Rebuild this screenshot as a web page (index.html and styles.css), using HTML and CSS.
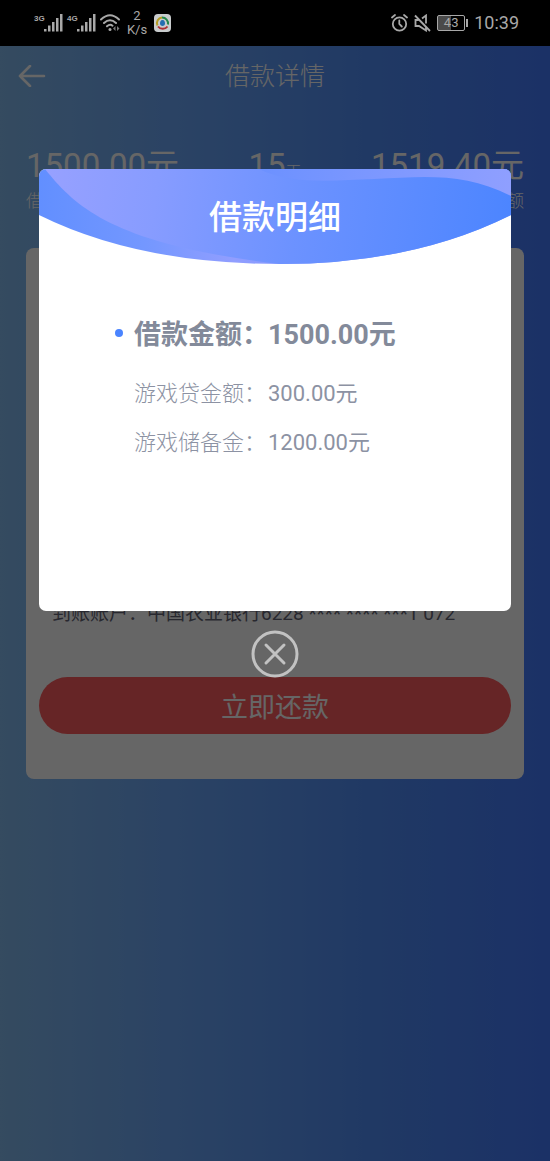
FILE: index.html
```html
<!DOCTYPE html>
<html lang="zh-CN">
<head>
<meta charset="utf-8">
<meta name="viewport" content="width=device-width, initial-scale=1">
<title>借款详情</title>
<link rel="stylesheet" href="styles.css">
</head>
<body>
<div class="status-bar">
  <div class="status-left">
    <div class="signal">
      <span class="network">3G</span>
      <svg width="19" height="18" viewBox="0 0 19 18" fill="currentColor" aria-hidden="true"><path d="M0 15h2.500v2.500H0zM4 11.500h2.500v6H4zM8 8h2.500v9.500H8zM12 4h2.500v13.500H12zM16 0h2.500v17.500H16z"/></svg>
    </div>
    <div class="signal">
      <span class="network">4G</span>
      <svg width="19" height="18" viewBox="0 0 19 18" fill="currentColor" aria-hidden="true"><path d="M0 15h2.500v2.500H0zM4 11.500h2.500v6H4zM8 8h2.500v9.500H8zM12 4h2.500v13.500H12zM16 0h2.500v17.500H16z"/></svg>
    </div>
    <svg class="wifi" width="20" height="18" viewBox="0 0 20 18" fill="none" stroke="currentColor" stroke-width="2" stroke-linecap="round" aria-hidden="true"><path d="M1 5.500Q10-3 19 5.500M4 9Q10 3.500 16 9M7 12.300q3-2.600 5.500-.6"/><circle cx="10" cy="15.500" r="1.500" fill="currentColor" stroke="none"/><path d="M15.500 12v5L13 14.500zM17 12v5l2.500-2.500z" fill="#777" stroke="none"/></svg>
    <div class="speed"><span>2</span><span>K/s</span></div>
    <svg class="app-icon" width="17" height="18" viewBox="0 0 17 18" fill="none" aria-hidden="true"><rect width="17" height="18" rx="4" fill="#c9cccd"/><path d="M3.500 11.500A5.600 5.600 0 0 1 8 3.500" stroke="#b59c22" stroke-width="2"/><path d="M8 3.500a6 6 0 0 1 6 7" stroke="#24884c" stroke-width="2"/><path d="M13.500 12.500a6 6 0 0 1-9.500 0" stroke="#ae3033" stroke-width="2"/><path d="M8.500 6c2 0 2.500 2 2.500 3.500S10 12 8.500 12 6 11 6 9.500 6.500 6 8.500 6" fill="#246eb1"/></svg>
  </div>
  <div class="status-right">
    <svg width="17" height="18" viewBox="0 0 17 18" fill="none" stroke="currentColor" stroke-width="1.800" stroke-linecap="round" aria-hidden="true"><circle cx="8.500" cy="10" r="6.700"/><path d="M8.300 6.500V10l2.500 2.500M1 3.500 4 1M16 3.500 13 1"/></svg>
    <svg width="17" height="18" viewBox="0 0 17 18" fill="none" stroke="currentColor" stroke-width="1.800" aria-hidden="true"><path d="M1 1.500 16 17M4.500 6H1.500v6h3.500l7 4.500v-3.500M8 4.500l4-3v8"/></svg>
    <div class="battery"><span>43</span></div>
    <span class="clock">10:39</span>
  </div>
</div>

<div class="screen">
  <header class="nav">
    <a class="back" href="#" aria-label="返回"><svg width="28" height="22" viewBox="0 0 28 22" fill="none" stroke="currentColor" stroke-width="2.600" stroke-linecap="round" stroke-linejoin="round" aria-hidden="true"><path d="M26 11H2M12 1 2 11l10 10"/></svg></a>
    <h1>借款详情</h1>
  </header>
  <main>
    <section class="summary">
      <div class="figure"><strong>1500.00元</strong><span>借款金额</span></div>
      <div class="figure"><strong>15<small>天</small></strong></div>
      <div class="figure figure-end"><strong>1519.40元</strong><span>还款金额</span></div>
    </section>
    <section class="card">
      <p class="account">到账账户：中国农业银行6228 **** **** ***1 072</p>
      <button class="repay" type="button">立即还款</button>
    </section>
  </main>

  <div class="overlay">
    <section class="dialog" role="dialog" aria-modal="true" aria-labelledby="dialog-title">
      <div class="dialog-head">
        <svg class="wave" viewBox="0 0 472 95" preserveAspectRatio="none" aria-hidden="true">
          <defs>
            <linearGradient id="base" gradientUnits="userSpaceOnUse" x1="0" y1="0" x2="260" y2="0"><stop offset="0" stop-color="#628fff"/><stop offset=".4" stop-color="#7397ff"/><stop offset=".75" stop-color="#919eff"/><stop offset="1" stop-color="#8098ff"/></linearGradient>
            <linearGradient id="front" gradientUnits="userSpaceOnUse" x1="0" y1="0" x2="472" y2="60"><stop offset="0" stop-color="#98a1ff"/><stop offset=".25" stop-color="#879cff"/><stop offset=".55" stop-color="#6c92ff"/><stop offset="1" stop-color="#4c85ff"/></linearGradient>
            <linearGradient id="crest" x1="0" y1="0" x2="1" y2="0"><stop offset="0" stop-color="#6c91ff"/><stop offset="1" stop-color="#8f9fff"/></linearGradient>
            <clipPath id="bowl"><path d="M0 0H472V46Q374 95 241 95Q99 95 0 46Z"/></clipPath>
          </defs>
          <g clip-path="url(#bowl)">
            <path fill="url(#base)" d="M0 0H472V95H0Z"/>
            <path fill="url(#front)" d="M6 0C37 39 77 76 241 95H472V0Z"/>
            <path fill="url(#crest)" d="M220 0C250 15 290 12 335 10C390 7 427 4 472 27V0Z"/>
          </g>
        </svg>
        <h2 id="dialog-title">借款明细</h2>
      </div>
      <dl class="details">
        <div class="row row-total"><dt>借款金额：</dt><dd>1500.00元</dd></div>
        <div class="row"><dt>游戏贷金额：</dt><dd>300.00元</dd></div>
        <div class="row"><dt>游戏储备金：</dt><dd>1200.00元</dd></div>
      </dl>
    </section>
    <button class="close" type="button" aria-label="关闭"><svg width="48" height="48" viewBox="0 0 48 48" fill="none" stroke="currentColor" stroke-width="3" stroke-linecap="round" aria-hidden="true"><circle cx="24" cy="24" r="22"/><path d="m15 15 18 18M33 15 15 33"/></svg></button>
  </div>
</div>
</body>
</html>
```

FILE: styles.css
```css
* {
  box-sizing: border-box;
}

body {
  margin: 0;
  min-height: 100vh;
  display: flex;
  flex-direction: column;
  font-family: Roboto, "Noto Sans CJK SC", sans-serif;
}

h1, h2, p, dl, dd {
  margin: 0;
}

button {
  padding: 0;
  border: 0;
  font: inherit;
  cursor: pointer;
}

svg {
  display: block;
}

.status-bar {
  display: flex;
  justify-content: space-between;
  align-items: center;
  height: 46px;
  padding: 0 31px 0 34px;
  background: #000;
  color: #a8a8a8;
}

.status-left,
.status-right {
  display: flex;
  align-items: center;
}

.status-left {
  gap: 4px;
}

.status-right {
  gap: 6px;
}

.signal {
  display: flex;
  align-items: flex-start;
}

.network {
  width: 10px;
  font: 700 8px/10px "Liberation Sans", sans-serif;
}

.speed {
  display: flex;
  flex-direction: column;
  align-items: center;
  width: 26px;
  font-size: 13px;
  line-height: 14px;
}

.battery {
  position: relative;
  width: 28px;
  height: 16px;
  margin-right: 3px;
  border: 1px solid currentColor;
  border-radius: 2px;
  background: linear-gradient(90deg, #4a4a4a 50%, #000 50%);
  font-size: 13px;
  line-height: 14px;
  text-align: center;
}

.battery::after {
  content: "";
  position: absolute;
  right: -4px;
  top: 3px;
  width: 2px;
  height: 8px;
  background: currentColor;
}

.clock {
  font-size: 18px;
  line-height: 24px;
}

.screen {
  position: relative;
  flex: 1;
  padding-bottom: 24px;
  background: linear-gradient(90deg, #84bbf0 0%, #68a5fb 36%, #5290fa 66%, #447bff 100%);
}

.nav {
  display: grid;
  grid-template-columns: 48px 1fr 48px;
  align-items: center;
  height: 60px;
  padding: 0 18px;
  color: #fff;
}

.back {
  color: inherit;
}

.nav h1 {
  padding-top: 2px;
  font-size: 25px;
  font-weight: 300;
  line-height: 36px;
  text-align: center;
}

.summary {
  display: flex;
  justify-content: space-between;
  min-height: 142px;
  padding: 40px 26px 0;
  color: #fff;
}

.figure {
  display: flex;
  flex-direction: column;
  gap: 3px;
}

.figure-end {
  align-items: flex-end;
}

.figure strong {
  font-size: 33px;
  font-weight: 400;
  line-height: 40px;
}

.figure small {
  font-size: 16px;
  font-weight: 300;
}

.figure span {
  font-size: 17px;
  font-weight: 300;
  line-height: 24px;
}

.card {
  margin: 0 26px;
  padding: 352px 13px 45px;
  border-radius: 8px;
  background: #fff;
}

.account {
  padding: 0 13px;
  color: #656575;
  font-size: 19px;
  line-height: 28px;
}

.repay {
  width: 100%;
  height: 57px;
  margin-top: 49px;
  border-radius: 29px;
  background: #ff5c5f;
  color: #fff;
  font-size: 27px;
}

.overlay {
  position: absolute;
  inset: 0;
  display: flex;
  flex-direction: column;
  align-items: center;
  gap: 19px;
  padding: 123px 39px 0;
  background: rgba(0, 0, 0, 0.6);
}

.dialog {
  width: 100%;
  padding-bottom: 152px;
  overflow: hidden;
  border-radius: 7px;
  background: #fff;
}

.dialog-head {
  display: grid;
}

.dialog-head > * {
  grid-area: 1 / 1;
}

.wave {
  width: 100%;
  height: 95px;
}

.dialog-head h2 {
  z-index: 1;
  align-self: center;
  padding-top: 2px;
  color: #fff;
  font-size: 33px;
  font-weight: 500;
  line-height: 48px;
  text-align: center;
}

.details {
  display: flex;
  flex-direction: column;
  gap: 17px;
  padding: 51px 0 0 76px;
}

.row {
  display: grid;
  grid-template-columns: 19px 134px 1fr;
  align-items: center;
  color: #8c92a3;
  font-size: 22px;
  line-height: 32px;
}

.row::before {
  content: "";
}

.row dt,
.row dd {
  white-space: nowrap;
}

.row dt {
  font-weight: 300;
}

.row-total {
  margin-bottom: 6px;
  color: #838a9a;
  font-size: 27px;
  font-weight: 700;
  line-height: 40px;
}

.row-total dt {
  font-weight: 700;
}

.row-total::before {
  width: 8px;
  height: 8px;
  margin-bottom: 4px;
  border-radius: 50%;
  background: #4a84ff;
}

.close {
  background: none;
  color: #c2c2c2;
}
```
